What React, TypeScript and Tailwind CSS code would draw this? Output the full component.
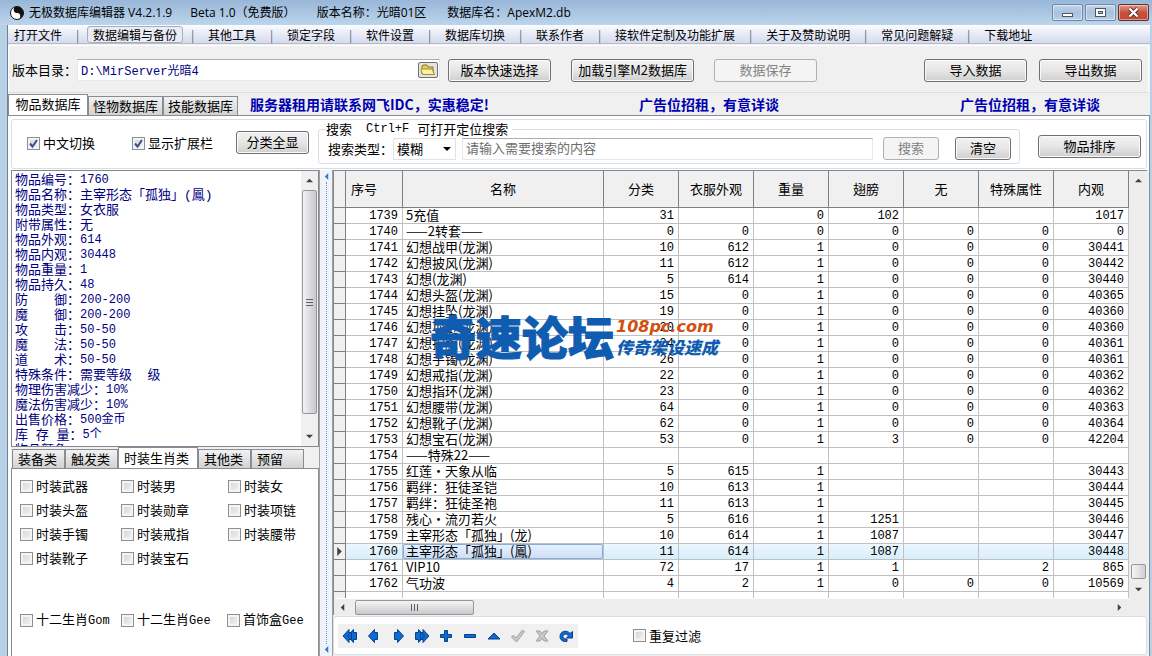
import { useState } from "react";
import type { ReactNode } from "react";

type Row = [number, string, ...(number | "")[]];

const rows: Row[] = [
  [1739, "5充值", 31, "", 0, 102, "", "", 1017],
  [1740, "——2转套——", 0, 0, 0, 0, 0, 0, 0],
  [1741, "幻想战甲(龙渊)", 10, 612, 1, 0, 0, 0, 30441],
  [1742, "幻想披风(龙渊)", 11, 612, 1, 0, 0, 0, 30442],
  [1743, "幻想(龙渊)", 5, 614, 1, 0, 0, 0, 30440],
  [1744, "幻想头盔(龙渊)", 15, 0, 1, 0, 0, 0, 40365],
  [1745, "幻想挂坠(龙渊)", 19, 0, 1, 0, 0, 0, 40360],
  [1746, "幻想项链(龙渊)", 20, 0, 1, 0, 0, 0, 40360],
  [1747, "幻想护腕(龙渊)", 24, 0, 1, 0, 0, 0, 40361],
  [1748, "幻想手镯(龙渊)", 26, 0, 1, 0, 0, 0, 40361],
  [1749, "幻想戒指(龙渊)", 22, 0, 1, 0, 0, 0, 40362],
  [1750, "幻想指环(龙渊)", 23, 0, 1, 0, 0, 0, 40362],
  [1751, "幻想腰带(龙渊)", 64, 0, 1, 0, 0, 0, 40363],
  [1752, "幻想靴子(龙渊)", 62, 0, 1, 0, 0, 0, 40364],
  [1753, "幻想宝石(龙渊)", 53, 0, 1, 3, 0, 0, 42204],
  [1754, "——特殊22——", "", "", "", "", "", "", ""],
  [1755, "红莲・天象从临", 5, 615, 1, "", "", "", 30443],
  [1756, "羁绊：狂徒圣铠", 10, 613, 1, "", "", "", 30444],
  [1757, "羁绊：狂徒圣袍", 11, 613, 1, "", "", "", 30445],
  [1758, "残心・流刃若火", 5, 616, 1, 1251, "", "", 30446],
  [1759, "主宰形态「孤独」(龙)", 10, 614, 1, 1087, "", "", 30447],
  [1760, "主宰形态「孤独」(鳳)", 11, 614, 1, 1087, "", "", 30448],
  [1761, "VIP10", 72, 17, 1, 1, "", 2, 865],
  [1762, "气功波", 4, 2, 1, 0, 0, 0, 10569],
];

const columns = ["分类", "衣服外观", "重量", "翅膀", "无", "特殊属性", "内观"];

const details: [string, string][] = [
  ["物品编号：", "1760"],
  ["物品名称：", "主宰形态「孤独」(鳳)"],
  ["物品类型：", "女衣服"],
  ["附带属性：", "无"],
  ["物品外观：", "614"],
  ["物品内观：", "30448"],
  ["物品重量：", "1"],
  ["物品持久：", "48"],
  ["防　　御：", "200-200"],
  ["魔　　御：", "200-200"],
  ["攻　　击：", "50-50"],
  ["魔　　法：", "50-50"],
  ["道　　术：", "50-50"],
  ["特殊条件：", "需要等级  级"],
  ["物理伤害减少：", "10%"],
  ["魔法伤害减少：", "10%"],
  ["出售价格：", "500金币"],
  ["库 存 量：", "5个"],
  ["物品颜色：", ""],
];

const menu = [
  "打开文件",
  "数据编辑与备份",
  "其他工具",
  "锁定字段",
  "软件设置",
  "数据库切换",
  "联系作者",
  "接软件定制及功能扩展",
  "关于及赞助说明",
  "常见问题解疑",
  "下载地址",
];

const fashion = [
  "时装武器", "时装男", "时装女",
  "时装头盔", "时装勋章", "时装项链",
  "时装手镯", "时装戒指", "时装腰带",
  "时装靴子", "时装宝石",
];

const zodiac = [
  ["十二生肖", "Gom"],
  ["十二生肖", "Gee"],
  ["首饰盒", "Gee"],
];

const Button = ({ children, className = "w-[103px]", disabled = false }: { children: ReactNode; className?: string; disabled?: boolean }) => (
  <button
    disabled={disabled}
    className={`h-[23px] shrink-0 rounded-[3px] border pb-px text-[13px] leading-[18px] ${
      disabled
        ? "border-[#adb2b5] bg-[#f4f4f4] text-[#838383]"
        : "border-[#707070] bg-linear-to-b from-[#f2f2f2] via-[#e6e6e6] to-[#cfcfcf] text-black shadow-[inset_0_0_0_1px_#fafafa]"
    } ${className}`}
  >
    {children}
  </button>
);

const Check = ({ label, checked = false }: { label: ReactNode; checked?: boolean }) => (
  <label className="relative flex items-center gap-[3px] whitespace-nowrap">
    <input
      type="checkbox"
      defaultChecked={checked}
      className="peer size-[13px] shrink-0 appearance-none border border-[#8e8f8f] bg-linear-to-br from-[#cfd2d6] to-[#f6f6f6] shadow-[inset_0_0_0_2px_#f4f4f4]"
    />
    <svg viewBox="0 0 13 13" className="pointer-events-none absolute left-0 hidden size-[13px] peer-checked:block">
      <path d="M3 6.5 5.5 9.5 10 3" fill="none" stroke="#3c4f93" strokeWidth="2" />
    </svg>
    <span>{label}</span>
  </label>
);

const Arrow = ({ dir, color = "#404040", className = "size-[7px]" }: { dir: "up" | "down" | "left" | "right"; color?: string; className?: string }) => {
  const points = {
    up: "0,6 4,2 8,6",
    down: "0,2 4,6 8,2",
    left: "6,0 2,4 6,8",
    right: "2,0 6,4 2,8",
  };
  return (
    <svg viewBox="0 0 8 8" className={`shrink-0 ${className}`}>
      <polygon points={points[dir]} fill={color} />
    </svg>
  );
};

const Caption = ({ label, close = false, children }: { label: string; close?: boolean; children: ReactNode }) => (
  <button
    aria-label={label}
    className={`flex h-[17px] w-[31px] items-center justify-center rounded-[2px] border shadow-[inset_0_0_0_1px_rgba(255,255,255,0.45)] ${
      close
        ? "border-[#6b2a24] bg-linear-to-b from-[#dc9a8c] via-[#c9513c] to-[#c04a35]"
        : "border-[#7089a6] bg-linear-to-b from-[#c3d5ea] via-[#a9c1dc] to-[#b9d0e8]"
    }`}
  >
    <svg viewBox="0 0 13 11" className="h-[11px] w-[13px]">{children}</svg>
  </button>
);

const navIcons: { label: string; path: string }[] = [
  { label: "首条", path: "M5.5 8 11.5 1.500v3h3v7h-3v3zM1 8 7 1.500v3h2.500v7H7v3z" },
  { label: "上一条", path: "M2.500 8 8.500 1.500v3h3v7h-3v3z" },
  { label: "下一条", path: "M13.500 8 7.500 1.500v3h-3v7h3v3z" },
  { label: "末条", path: "M10.500 8 4.500 1.500v3h-3v7h3v3zM15 8 9 1.500v3H6.500v7H9v3z" },
  { label: "新增", path: "M6.500 2.500h3v4h4v3h-4v4h-3v-4h-4v-3h4z" },
  { label: "删除", path: "M2.500 6.500h11v3h-11z" },
  { label: "编辑", path: "M8 5 14 11H2z" },
  { label: "提交", path: "M1.500 9 3.500 7l2.500 3L12.500 2l2 1.500L6.500 14z" },
  { label: "取消", path: "M2 3h4l2 3 2-3h4l-4 5 4 5h-4L8 10l-2 3H2l4-5z" },
  { label: "刷新", path: "M12 5.500 14.500 3.500v6.500H8.500l2-2C9.500 5.500 5 5.500 5 8.500c0 2 2 2.500 4 2.500v2.500C5 14 2 12 2 8.500 2 3 9 1.500 12 5.500z" },
];

const Navigator = () => (
  <div className="flex bg-[#f0f0f0]">
    {navIcons.map(({ label, path }) => {
      const off = label === "提交" || label === "取消";
      return (
        <button key={label} aria-label={label} disabled={off} className="flex size-6 items-center justify-center">
          <svg viewBox="0 0 16 16" className="size-4">
            <path d={path} fill={off ? "#c9c9c9" : "#0b6bd0"} stroke={off ? "#a0a0a0" : "#063f8c"} strokeWidth="1" />
          </svg>
        </button>
      );
    })}
  </div>
);

const DetailPanel = () => (
  <div className="flex h-[277px] shrink-0 overflow-hidden border border-[#828790] bg-white">
    <div className="flex-1 overflow-hidden py-[2px] pl-[3px] font-['Liberation_Mono','Noto_Sans_CJK_SC',monospace] whitespace-pre text-[#000080]">
      {details.map(([label, value]) => (
        <div key={label} className="flex h-[15px] items-center leading-[15px]">
          <span>{label}</span>
          <span className={/^\d/.test(value) ? "text-[12px]" : ""}>{value}</span>
        </div>
      ))}
    </div>
    <div className="flex w-[17px] flex-col items-center bg-[#f0f0f0]">
      <div className="flex h-[19px] items-center"><Arrow dir="up" /></div>
      <div className="flex h-[224px] w-[15px] flex-col items-center justify-center gap-[2px] rounded-[2px] border border-[#979797] bg-linear-to-r from-[#f3f3f3] to-[#c8c8cc]">
        <i className="h-px w-[7px] bg-[#606060]" />
        <i className="h-px w-[7px] bg-[#606060]" />
        <i className="h-px w-[7px] bg-[#606060]" />
      </div>
      <div className="mt-auto flex h-[19px] items-center"><Arrow dir="down" /></div>
    </div>
  </div>
);

const CategoryTabs = () => {
  const [active, setActive] = useState("时装生肖类");
  const tabs = ["装备类", "触发类", "时装生肖类", "其他类", "预留"];

  return (
    <div className="flex flex-1 flex-col">
      <div className="flex h-[21px] items-end pl-px">
        {tabs.map((tab) => (
          <button
            key={tab}
            onClick={() => setActive(tab)}
            className={`border border-b-0 border-[#898c95] pl-[5px] text-left leading-[18px] ${
              tab === active
                ? "h-[21px] w-20 bg-white"
                : "h-[19px] w-[53px] bg-linear-to-b from-[#f2f2f2] to-[#d2d2d2]"
            }`}
          >
            {tab}
          </button>
        ))}
      </div>
      <div className="flex-1 border border-b-0 border-[#898c95] bg-white pt-[5px] pl-2">
        <div className="grid auto-rows-[24px] grid-cols-[101px_107px_1fr]">
          {fashion.map((name) => <Check key={name} label={name} />)}
        </div>
        <div className="mt-[38px] grid auto-rows-[24px] grid-cols-[101px_106px_1fr]">
          {zodiac.map(([name, engine]) => (
            <Check
              key={name + engine}
              label={<>{name}<span className="font-['Liberation_Mono',monospace] text-[12px]">{engine}</span></>}
            />
          ))}
        </div>
      </div>
    </div>
  );
};

const Watermark = () => (
  <div className="pointer-events-none absolute top-[139px] left-[96px] flex items-center gap-[2px] text-[#0f5cb0]">
    <span className="text-[46px] leading-[50px] font-black [-webkit-text-stroke:1px_#0f5cb0]">奇速论坛</span>
    <div className="flex flex-col pt-1 italic">
      <span className="font-['DejaVu_Sans',sans-serif] text-[16px] leading-[20px] font-bold text-[#d2500f]">108pc.com</span>
      <span className="text-[17px] leading-[20px] font-black">传奇架设速成</span>
    </div>
  </div>
);

const ItemTable = () => {
  const [selected, setSelected] = useState(1760);

  return (
    <div className="relative flex min-h-0 flex-1 flex-col border-t border-l border-[#828790]">
      <div className="flex min-h-0 flex-1">
        <div className="flex-1 overflow-hidden bg-white">
          <table className="w-full table-fixed border-separate border-spacing-0">
            <colgroup>
              <col className="w-[12px]" />
              <col className="w-[57px]" />
              <col />
              {columns.map((name) => <col key={name} className="w-[75px]" />)}
            </colgroup>
            <thead>
              <tr className="h-[37px] bg-[#f0f0f0]">
                <th className="border-r border-b border-[#808080]" />
                <th className="border-r border-b border-[#808080] pl-[5px] text-left font-normal">序号</th>
                <th className="border-r border-b border-[#808080] font-normal">名称</th>
                {columns.map((name) => (
                  <th key={name} className="border-r border-b border-[#808080] font-normal">{name}</th>
                ))}
              </tr>
            </thead>
            <tbody>
              {rows.map(([id, name, ...values]) => {
                const on = id === selected;
                return (
                  <tr
                    key={id}
                    onClick={() => setSelected(id)}
                    className={`h-4 leading-[13px] ${on ? "bg-linear-to-b from-[#ecf7fe] to-[#d5edfb]" : ""}`}
                  >
                    <td className="border-r border-b border-[#808080] bg-[#f0f0f0]">
                      <div className="flex h-[15px] items-center justify-center">{on && <Arrow dir="right" className="size-[9px]" />}</div>
                    </td>
                    <td className="border-r border-b border-[#c0c0c0] pt-[2px] pr-1 text-right font-['Liberation_Mono',monospace] text-[12px]">{id}</td>
                    <td className="border-r border-b border-[#c0c0c0]">
                      <div
                        className={`h-[15px] rounded-[2px] pl-[3px] whitespace-nowrap ${
                          on ? "bg-linear-to-b from-[#eaf2fd] to-[#c9def8] shadow-[inset_0_0_0_1px_#84acdd]" : ""
                        }`}
                      >
                        {name}
                      </div>
                    </td>
                    {values.map((value, i) => (
                      <td key={i} className="border-r border-b border-[#c0c0c0] pt-[2px] pr-1 text-right font-['Liberation_Mono',monospace] text-[12px]">
                        {value}
                      </td>
                    ))}
                  </tr>
                );
              })}
              <tr className="h-[6px]">
                <td className="border-r border-[#808080] bg-[#f0f0f0]" />
                {Array.from({ length: 9 }, (_, i) => <td key={i} className="border-r border-[#c0c0c0]" />)}
              </tr>
            </tbody>
          </table>
        </div>
        <div className="flex w-[18px] flex-col items-center bg-[#ededed]">
          <div className="flex h-[19px] items-center"><Arrow dir="up" /></div>
          <div className="flex-1" />
          <div className="h-[15px] w-[15px] rounded-[2px] border border-[#979797] bg-linear-to-r from-[#f6f6f6] to-[#cfcfd2]" />
          <div className="flex h-[20px] items-center"><Arrow dir="down" /></div>
        </div>
      </div>

      {/* Horizontal scroll bar */}
      <div className="flex h-[16px] items-center bg-[#ededed] pr-[24px] pl-[5px]">
        <Arrow dir="left" />
        <div className="ml-[9px] flex h-[15px] w-[119px] items-center justify-center gap-[2px] rounded-[2px] border border-[#979797] bg-linear-to-b from-[#f6f6f6] to-[#c8c8cc]">
          <i className="h-[7px] w-px bg-[#606060]" />
          <i className="h-[7px] w-px bg-[#606060]" />
          <i className="h-[7px] w-px bg-[#606060]" />
        </div>
        <div className="ml-auto flex"><Arrow dir="right" /></div>
      </div>
      <Watermark />
    </div>
  );
};

const App = () => {
  const [tab, setTab] = useState("物品数据库");

  return (
    <div className="flex h-screen flex-col overflow-hidden bg-[#b9d1e6] font-['Noto_Sans_CJK_SC',sans-serif] text-[13px] leading-[16px] text-black">
      {/* Title bar */}
      <header className="flex h-[25px] shrink-0 items-center bg-linear-to-b from-[#98b6d8] to-[#bcd5ec] pr-[3px] pl-[10px] font-['Open_Sans','Noto_Sans_CJK_SC',sans-serif] text-[12px] whitespace-pre">
        <svg viewBox="0 0 14 14" className="mr-[5px] size-[14px]">
          <circle cx="7" cy="7" r="6.500" fill="#fff" stroke="#111" />
          <path d="M7 .5a6.500 6.500 0 0 1 0 13 3.250 3.250 0 0 0 0-6.500 3.250 3.250 0 0 1 0-6.500z" fill="#111" />
          <circle cx="7" cy="3.700" r="1.200" fill="#111" />
          <circle cx="7" cy="10.300" r="1.200" fill="#fff" />
        </svg>
        <h1>无极数据库编辑器 V4.2.1.9</h1>
        <span className="ml-[18px]">Beta 1.0（免费版）</span>
        <span className="ml-[21px]">版本名称：光暗01区</span>
        <span className="ml-[21px]">数据库名：ApexM2.db</span>
        <div className="ml-auto flex gap-[2px]">
          <Caption label="最小化"><rect x="1.500" y="6.500" width="10" height="3" fill="#fff" stroke="#4a5868" /></Caption>
          <Caption label="最大化">
            <rect x="1.500" y="1.500" width="10" height="8" fill="#fff" stroke="#4a5868" />
            <rect x="4.500" y="4.500" width="4" height="2" fill="#a9c1dc" stroke="#4a5868" />
          </Caption>
          <Caption label="关闭" close>
            <path d="M2.500 1.500 10.500 9.500M10.500 1.500 2.500 9.500" stroke="#5c2a28" strokeWidth="4" />
            <path d="M2.500 1.500 10.500 9.500M10.500 1.500 2.500 9.500" stroke="#fff" strokeWidth="2.400" />
          </Caption>
        </div>
      </header>

      <div className="mr-[2px] ml-[7px] flex min-h-0 flex-1 flex-col border-l border-[#6f8297] bg-[#f0f0f0]">
        {/* Menu */}
        <nav className="flex h-[19px] shrink-0 items-center border-b border-[#b6bccc] bg-linear-to-b from-[#fbfcfe] via-[#e7ebf7] to-[#d5dbee] pl-[6px] text-[12px] leading-[15px] whitespace-nowrap">
          {menu.map((item, i) => (
            <div key={item} className="flex items-center">
              {i > 0 && <span className="w-[31px] text-center text-[#606878]">|</span>}
              <button
                className={
                  item === "数据编辑与备份"
                    ? "-mx-[6px] h-[17px] rounded-[3px] border border-[#a9adb8] bg-[#e9ecf5] px-[5px]"
                    : ""
                }
              >
                {item}
              </button>
            </div>
          ))}
        </nav>

        {/* Version path bar */}
        <div className="mt-px mr-px flex h-[48px] shrink-0 items-center rounded-[3px] border border-white border-b-[#d5dfe5] pt-[2px] pr-[6px] pl-[3px]">
          <label htmlFor="path">版本目录：</label>
          <div className="flex h-[22px] w-[363px] items-center border border-[#e3e9ef] border-t-[#abadb3] bg-white pr-px">
            <input
              id="path"
              defaultValue="D:\MirServer光暗4"
              className="h-full min-w-0 flex-1 pl-[3px] font-['Liberation_Mono','Noto_Sans_CJK_SC',monospace] text-[12px] text-[#000080] outline-none"
            />
            <button aria-label="浏览" className="flex h-[16px] w-5 items-center justify-center rounded-[2px] border border-[#707070] bg-[#e4e4e0]">
              <svg viewBox="0 0 16 12" className="h-3 w-4">
                <path d="M2 10V2l1-1h4l1 2h5v7z" fill="#e5cf58" stroke="#8d7a1c" />
                <path d="M2.500 10.500 1 5h11l2.500 5.500z" fill="#fbf3a4" stroke="#a38f2c" />
              </svg>
            </button>
          </div>
          <div className="ml-2 flex gap-[20px]">
            <Button>版本快速选择</Button>
            <Button className="w-[123px]">加载引擎M2数据库</Button>
            <Button disabled>数据保存</Button>
          </div>
          <div className="ml-auto flex gap-3">
            <Button>导入数据</Button>
            <Button>导出数据</Button>
          </div>
        </div>

        {/* Database tabs and notices */}
        <div className="flex h-[22px] shrink-0 items-end">
          {["物品数据库", "怪物数据库", "技能数据库"].map((name) => (
            <button
              key={name}
              onClick={() => setTab(name)}
              className={`border border-b-0 border-[#898c95] leading-[18px] ${
                name === tab ? "h-[21px] w-20 bg-white pb-[2px]" : "h-[19px] w-[75px] bg-linear-to-b from-[#f2f2f2] to-[#d2d2d2]"
              }`}
            >
              {name}
            </button>
          ))}
          <div className="flex flex-1 self-center pr-[50px] pl-[12px] text-[14px] leading-[20px] font-bold whitespace-nowrap text-[#0000b0]">
            <span>服务器租用请联系网飞IDC，实惠稳定!</span>
            <span className="ml-[150px]">广告位招租，有意详谈</span>
            <span className="ml-auto">广告位招租，有意详谈</span>
          </div>
        </div>

        <main className="flex min-h-0 flex-1 flex-col border-t border-r border-[#898c95] bg-white pt-[3px] pl-[3px]">
          {/* Filter bar */}
          <div className="mr-[2px] flex h-[50px] shrink-0 items-start rounded-[3px] border border-[#d5dfe5] pr-[5px]">
            <div className="ml-[15px] flex gap-[37px] pt-[15px]">
              <Check label="中文切换" checked />
              <Check label="显示扩展栏" checked />
            </div>
            <div className="mt-[11px] ml-[23px] flex">
              <Button className="w-[73px]">分类全显</Button>
            </div>
            <fieldset className="mt-[2px] ml-[9px] h-[42px] min-w-0 flex-1 rounded-[3px] border border-[#d5dfe5] pr-2 pl-[7px]">
              <legend className="flex gap-[14px] pr-1 leading-[13px]">
                <span>搜索</span>
                <span className="flex gap-2">
                  <span className="font-['Liberation_Mono',monospace] text-[12px] leading-[15px]">Ctrl+F</span>
                  <span>可打开定位搜索</span>
                </span>
              </legend>
              <div className="flex items-center">
                <label htmlFor="mode" className="ml-[2px] shrink-0">搜索类型：</label>
                <div className="relative flex h-[22px] w-[63px] shrink-0 items-center border border-[#dfe3e8]">
                  <select id="mode" className="w-full appearance-none pl-[3px] outline-none">
                    <option>模糊</option>
                    <option>精确</option>
                  </select>
                  <svg viewBox="0 0 8 4" className="pointer-events-none absolute right-1 h-1 w-2"><path d="M0 0h8L4 4z" /></svg>
                </div>
                <input
                  aria-label="搜索内容"
                  placeholder="请输入需要搜索的内容"
                  className="mx-[6px] h-[22px] min-w-0 flex-1 border border-[#e3e9ef] border-t-[#abadb3] px-[3px] pb-[2px] outline-none placeholder:text-[#6d6d6d]"
                />
                <div className="ml-1 flex gap-4">
                  <Button className="w-[56px]" disabled>搜索</Button>
                  <Button className="w-[56px]">清空</Button>
                </div>
              </div>
            </fieldset>
            <div className="mt-[15px] ml-[18px] flex">
              <Button>物品排序</Button>
            </div>
          </div>

          <div className="mt-px flex min-h-0 flex-1">
            <aside className="flex w-[308px] shrink-0 flex-col bg-[#f0f0f0]">
              <DetailPanel />
              <CategoryTabs />
            </aside>

            {/* Splitter */}
            <div className="flex w-[14px] shrink-0 flex-col items-center gap-[2px] border-x border-[#a0a0a0] bg-[#f0f3f8] py-[3px]">
              <Arrow dir="left" color="#2a7fd4" />
              <div className="flex-1 border-l border-dotted border-[#6f8fd8]" />
              <Arrow dir="left" color="#2a7fd4" />
            </div>

            <section className="flex min-w-0 flex-1 flex-col bg-[#f0f0f0] pr-[2px]">
              <ItemTable />
              <div className="mt-px mb-px flex h-[39px] shrink-0 items-center gap-[55px] rounded-[3px] border border-[#d5dfe5] bg-white pl-1">
                <Navigator />
                <Check label="重复过滤" />
              </div>
            </section>
          </div>
        </main>
      </div>
    </div>
  );
};

export default App;
